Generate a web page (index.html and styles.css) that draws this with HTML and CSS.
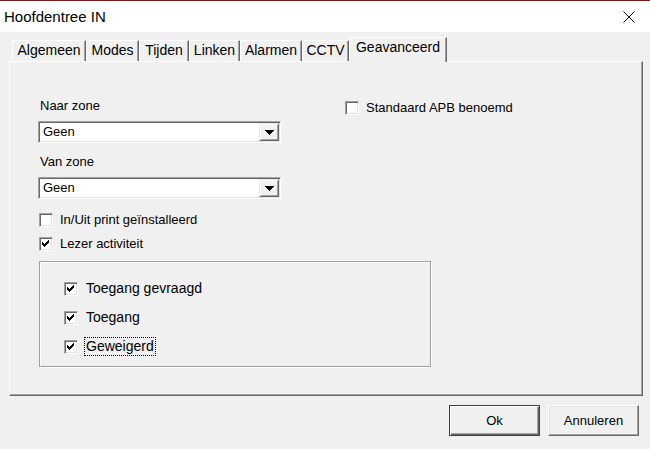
FILE: index.html
```html
<!DOCTYPE html>
<html lang="nl">
<head>
<meta charset="utf-8">
<title>Hoofdentree IN</title>
<link rel="stylesheet" href="styles.css">
</head>
<body>
<div class="window">
  <div class="titlebar">
    <span class="title">Hoofdentree IN</span>
    <svg class="close" width="12" height="12" viewBox="0 0 12 12"><path d="M0.5 0.5 L11.5 11.5 M11.5 0.5 L0.5 11.5" stroke="#000" stroke-width="1" fill="none"/></svg>
  </div>
  <div class="client">
    <div class="tabs">
      <div class="tab t-alg">Algemeen</div>
      <div class="tab t-mod">Modes</div>
      <div class="tab t-tij">Tijden</div>
      <div class="tab t-lin">Linken</div>
      <div class="tab t-ala">Alarmen</div>
      <div class="tab t-cct">CCTV</div>
      <div class="tab active t-gea">Geavanceerd</div>
    </div>
    <div class="panel">
      <div class="cols">
        <div class="left">
          <div class="label">Naar zone</div>
          <div class="combo">
            <span class="combo-text">Geen</span>
            <span class="combo-btn"><svg width="9" height="5" viewBox="0 0 9 5" shape-rendering="crispEdges"><path d="M0 0H9V1H8V2H7V3H6V4H5V5H4V4H3V3H2V2H1V1H0Z" fill="#000"/></svg></span>
          </div>
          <div class="label label-2">Van zone</div>
          <div class="combo">
            <span class="combo-text">Geen</span>
            <span class="combo-btn"><svg width="9" height="5" viewBox="0 0 9 5" shape-rendering="crispEdges"><path d="M0 0H9V1H8V2H7V3H6V4H5V5H4V4H3V3H2V2H1V1H0Z" fill="#000"/></svg></span>
          </div>
          <div class="check row-inuit"><span class="box"></span><span>In/Uit print geïnstalleerd</span></div>
          <div class="check row-lezer"><span class="box"><svg width="8" height="8" viewBox="0 0 8 8" shape-rendering="crispEdges"><path d="M0 2H1V3H2V4H3V3H4V2H5V1H6V0H7V3H6V4H5V5H4V6H3V7H2V6H1V5H0Z" fill="#000"/></svg></span><span>Lezer activiteit</span></div>
          <div class="group">
            <div class="gcheck"><span class="box"><svg width="8" height="8" viewBox="0 0 8 8" shape-rendering="crispEdges"><path d="M0 2H1V3H2V4H3V3H4V2H5V1H6V0H7V3H6V4H5V5H4V6H3V7H2V6H1V5H0Z" fill="#000"/></svg></span><span class="flabel">Toegang gevraagd</span></div>
            <div class="gcheck"><span class="box"><svg width="8" height="8" viewBox="0 0 8 8" shape-rendering="crispEdges"><path d="M0 2H1V3H2V4H3V3H4V2H5V1H6V0H7V3H6V4H5V5H4V6H3V7H2V6H1V5H0Z" fill="#000"/></svg></span><span class="flabel">Toegang</span></div>
            <div class="gcheck"><span class="box"><svg width="8" height="8" viewBox="0 0 8 8" shape-rendering="crispEdges"><path d="M0 2H1V3H2V4H3V3H4V2H5V1H6V0H7V3H6V4H5V5H4V6H3V7H2V6H1V5H0Z" fill="#000"/></svg></span><span class="flabel focus">Geweigerd</span></div>
          </div>
        </div>
        <div class="right">
          <div class="check apb"><span class="box"></span><span>Standaard APB benoemd</span></div>
        </div>
      </div>
    </div>
    <div class="buttons">
      <button class="btn default">Ok</button>
      <button class="btn">Annuleren</button>
    </div>
  </div>
</div>
</body>
</html>
```

FILE: styles.css
```css
body {
  margin: 0;
  background: #f0f0f0;
  font-family: "Liberation Sans", Arial, sans-serif;
  color: #000;
}

.window {
  width: 650px;
  height: 449px;
  overflow: hidden;
}

.titlebar {
  height: 31px;
  border-top: 1px solid #7b1a1a;
  background: #fff;
  display: flex;
  align-items: center;
  justify-content: space-between;
  padding: 0 15px 0 4px;
}

.title {
  font-size: 15px;
  line-height: 18px;
}

.close {
  display: block;
}

.client {
  padding: 5px 7px 0 9px;
}

.tabs {
  display: flex;
  align-items: flex-end;
  height: 24px;
  padding-left: 3px;
  position: relative;
  z-index: 1;
}

.tab {
  box-sizing: border-box;
  height: 21px;
  border-top: 1px solid #fff;
  border-left: 1px solid #fff;
  border-right: 1px solid #696969;
  box-shadow: inset -1px 0 0 #a0a0a0;
  background: #f0f0f0;
  font-size: 14px;
  line-height: 19px;
  text-align: center;
  white-space: nowrap;
}

.tab.active {
  height: 25px;
  margin-bottom: -1px;
}

.t-alg { width: 74px; }
.t-mod { width: 53px; }
.t-tij { width: 50px; }
.t-lin { width: 51px; }
.t-ala { width: 62px; }
.t-cct { width: 47px; }
.t-gea { width: 98px; }

.panel {
  box-sizing: border-box;
  height: 335px;
  border-top: 1px solid #fff;
  border-left: 1px solid #fff;
  border-right: 1px solid #696969;
  border-bottom: 1px solid #696969;
  box-shadow: inset -1px -1px 0 #a0a0a0;
  padding: 36px 0 0 28px;
}

.cols {
  display: flex;
}

.left {
  width: 307px;
  flex: none;
}

.label {
  font-size: 13px;
  line-height: 15px;
  padding-left: 2px;
}

.label-2 {
  margin-top: 11px;
}

.combo {
  box-sizing: border-box;
  width: 243px;
  height: 22px;
  margin-top: 8px;
  border: 1px solid;
  border-color: #a0a0a0 #fff #fff #a0a0a0;
  box-shadow: inset 1px 1px 0 #696969, inset -1px -1px 0 #e3e3e3;
  background: #fff;
  padding: 1px;
  display: flex;
}

.combo-text {
  flex: 1;
  font-size: 13px;
  line-height: 18px;
  padding-left: 3px;
}

.combo-btn {
  box-sizing: border-box;
  width: 20px;
  height: 18px;
  background: #f0f0f0;
  border: 1px solid;
  border-color: #e3e3e3 #696969 #696969 #e3e3e3;
  box-shadow: inset 1px 1px 0 #fff, inset -1px -1px 0 #a0a0a0;
  display: flex;
  align-items: center;
  justify-content: center;
}

.combo-btn svg {
  display: block;
}

.check {
  display: flex;
  align-items: center;
  gap: 7px;
  font-size: 13px;
  line-height: 15px;
  margin-left: 1px;
  white-space: nowrap;
}

.row-inuit {
  margin-top: 13px;
}

.row-lezer {
  margin-top: 9px;
}

.apb {
  margin-top: 2px;
  margin-left: 0;
}

.box {
  box-sizing: border-box;
  width: 14px;
  height: 14px;
  flex: none;
  border: 1px solid;
  border-color: #a0a0a0 #fff #fff #a0a0a0;
  box-shadow: inset 1px 1px 0 #696969, inset -1px -1px 0 #e3e3e3;
  background: #fff;
  display: flex;
  align-items: center;
  justify-content: center;
}

.box svg {
  display: block;
}

.group {
  box-sizing: border-box;
  width: 392px;
  height: 106px;
  margin-top: 10px;
  margin-left: 1px;
  border: 1px solid #a0a0a0;
  box-shadow: inset 1px 1px 0 #fff, 1px 1px 0 #fff;
  padding: 17px 0 0 24px;
}

.gcheck {
  display: flex;
  align-items: center;
  gap: 6px;
  height: 19px;
  font-size: 14px;
  line-height: 17px;
  white-space: nowrap;
}

.gcheck + .gcheck {
  margin-top: 10px;
}

.flabel {
  border: 1px dotted transparent;
  padding: 0 1px;
}

.flabel.focus {
  border-color: #000;
}

.buttons {
  display: flex;
  justify-content: flex-end;
  gap: 8px;
  margin-top: 9px;
  padding-right: 4px;
}

.btn {
  box-sizing: border-box;
  width: 91px;
  height: 31px;
  padding: 0;
  font-family: "Liberation Sans", Arial, sans-serif;
  font-size: 13px;
  color: #000;
  background: #f0f0f0;
  border: 1px solid;
  border-color: #fff #696969 #696969 #fff;
  box-shadow: inset -1px -1px 0 #a0a0a0, inset 1px 1px 0 #e3e3e3;
}

.btn.default {
  border-color: #404040;
  box-shadow: inset 1px 1px 0 #fff, inset -1px -1px 0 #696969, inset -2px -2px 0 #a0a0a0;
}
```
